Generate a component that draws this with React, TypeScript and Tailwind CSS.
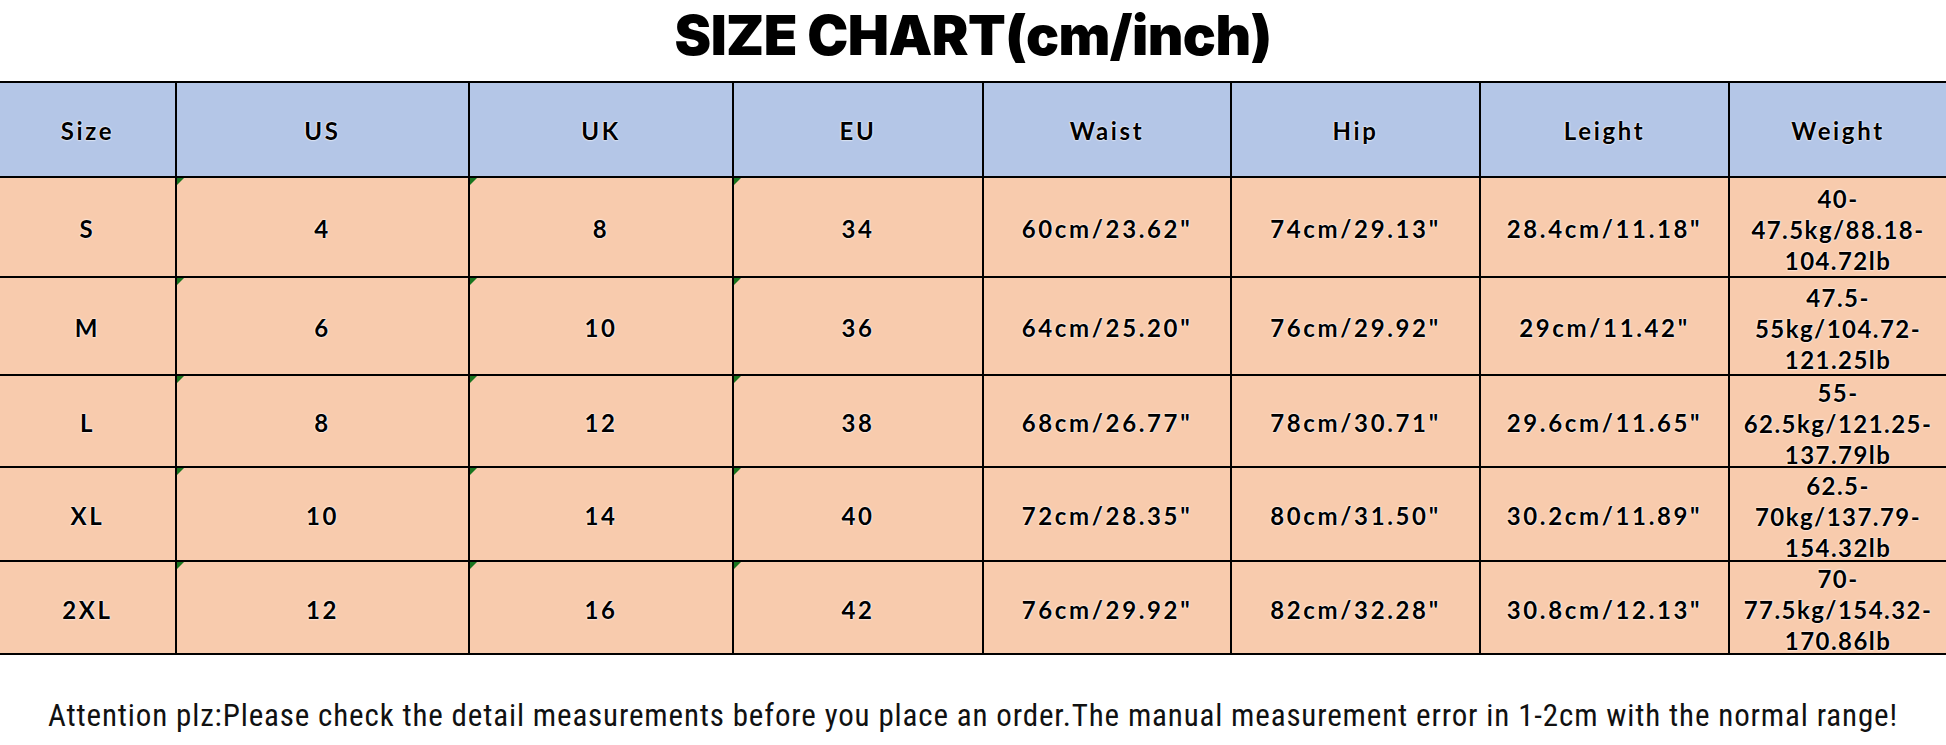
const header = ["Size", "US", "UK", "EU", "Waist", "Hip", "Leight", "Weight"];

const rows = [
    { h: "h-[100px]", cells: ["S", "4", "8", "34", "60cm/23.62\"", "74cm/29.13\"", "28.4cm/11.18\"", ["40-", "47.5kg/88.18-", "104.72lb"]] },
    { h: "h-[98px]", cells: ["M", "6", "10", "36", "64cm/25.20\"", "76cm/29.92\"", "29cm/11.42\"", ["47.5-", "55kg/104.72-", "121.25lb"]] },
    { h: "h-[92px]", cells: ["L", "8", "12", "38", "68cm/26.77\"", "78cm/30.71\"", "29.6cm/11.65\"", ["55-", "62.5kg/121.25-", "137.79lb"]] },
    { h: "h-[94px]", cells: ["XL", "10", "14", "40", "72cm/28.35\"", "80cm/31.50\"", "30.2cm/11.89\"", ["62.5-", "70kg/137.79-", "154.32lb"]] },
    { h: "h-[93px]", cells: ["2XL", "12", "16", "42", "76cm/29.92\"", "82cm/32.28\"", "30.8cm/12.13\"", ["70-", "77.5kg/154.32-", "170.86lb"]] },
];

const cols = "grid-cols-[177px_293px_264px_250px_248px_249px_249px_216px]";
const cellText =
    "font-['Lato',sans-serif] font-bold text-[24px] tracking-[0.11em] text-black [text-shadow:0_0_2px_#fff,0_0_2px_#fff]";

export default function App() {
    return (
        <div className="w-[1946px] h-[745px] bg-white overflow-hidden">
            <h1 className="h-[81px] flex items-start justify-center pt-[2px] font-['Inter',sans-serif] font-black text-[55px] leading-[66px] tracking-[-0.01em] text-black">
                SIZE CHART(cm/inch)
            </h1>

            <div className="border-t-2 border-black">
                <div className={`grid grid-rows-1 ${cols} h-[95px] bg-[#b4c6e7]`}>
                    {header.map((label, i) => (
                        <div
                            key={label}
                            className={`flex items-center justify-center pt-[2px] border-b-2 border-black ${i < 7 ? "border-r-2" : ""} ${cellText}`}
                        >
                            {label}
                        </div>
                    ))}
                </div>

                {rows.map((row) => (
                    <div key={row.cells[0] as string} className={`grid grid-rows-1 ${cols} ${row.h} bg-[#f8cbad]`}>
                        {row.cells.map((cell, i) => (
                            <div
                                key={i}
                                className={`relative min-h-0 flex items-center justify-center pt-[4px] border-b-2 border-black ${i < 7 ? "border-r-2" : ""} ${cellText}`}
                            >
                                {i >= 1 && i <= 3 && (
                                    <span className="absolute left-0 top-0 w-0 h-0 border-t-[7px] border-t-[#18751f] border-r-[7px] border-r-transparent" />
                                )}
                                {Array.isArray(cell) ? (
                                    <div className="flex flex-col items-center leading-[31px] tracking-[0.06em]">
                                        {cell.map((line) => (
                                            <span key={line}>{line}</span>
                                        ))}
                                    </div>
                                ) : (
                                    cell
                                )}
                            </div>
                        ))}
                    </div>
                ))}
            </div>

            <p className="h-[90px] flex items-start justify-center pt-[44px] leading-[34px] font-['Liberation_Sans_Narrow','Roboto_Condensed',Roboto,sans-serif] text-[31px] tracking-[0.85px] text-[#111]">
                Attention plz:Please check the detail measurements before you place an order.The manual measurement error in 1-2cm with the normal range!
            </p>
        </div>
    );
}
